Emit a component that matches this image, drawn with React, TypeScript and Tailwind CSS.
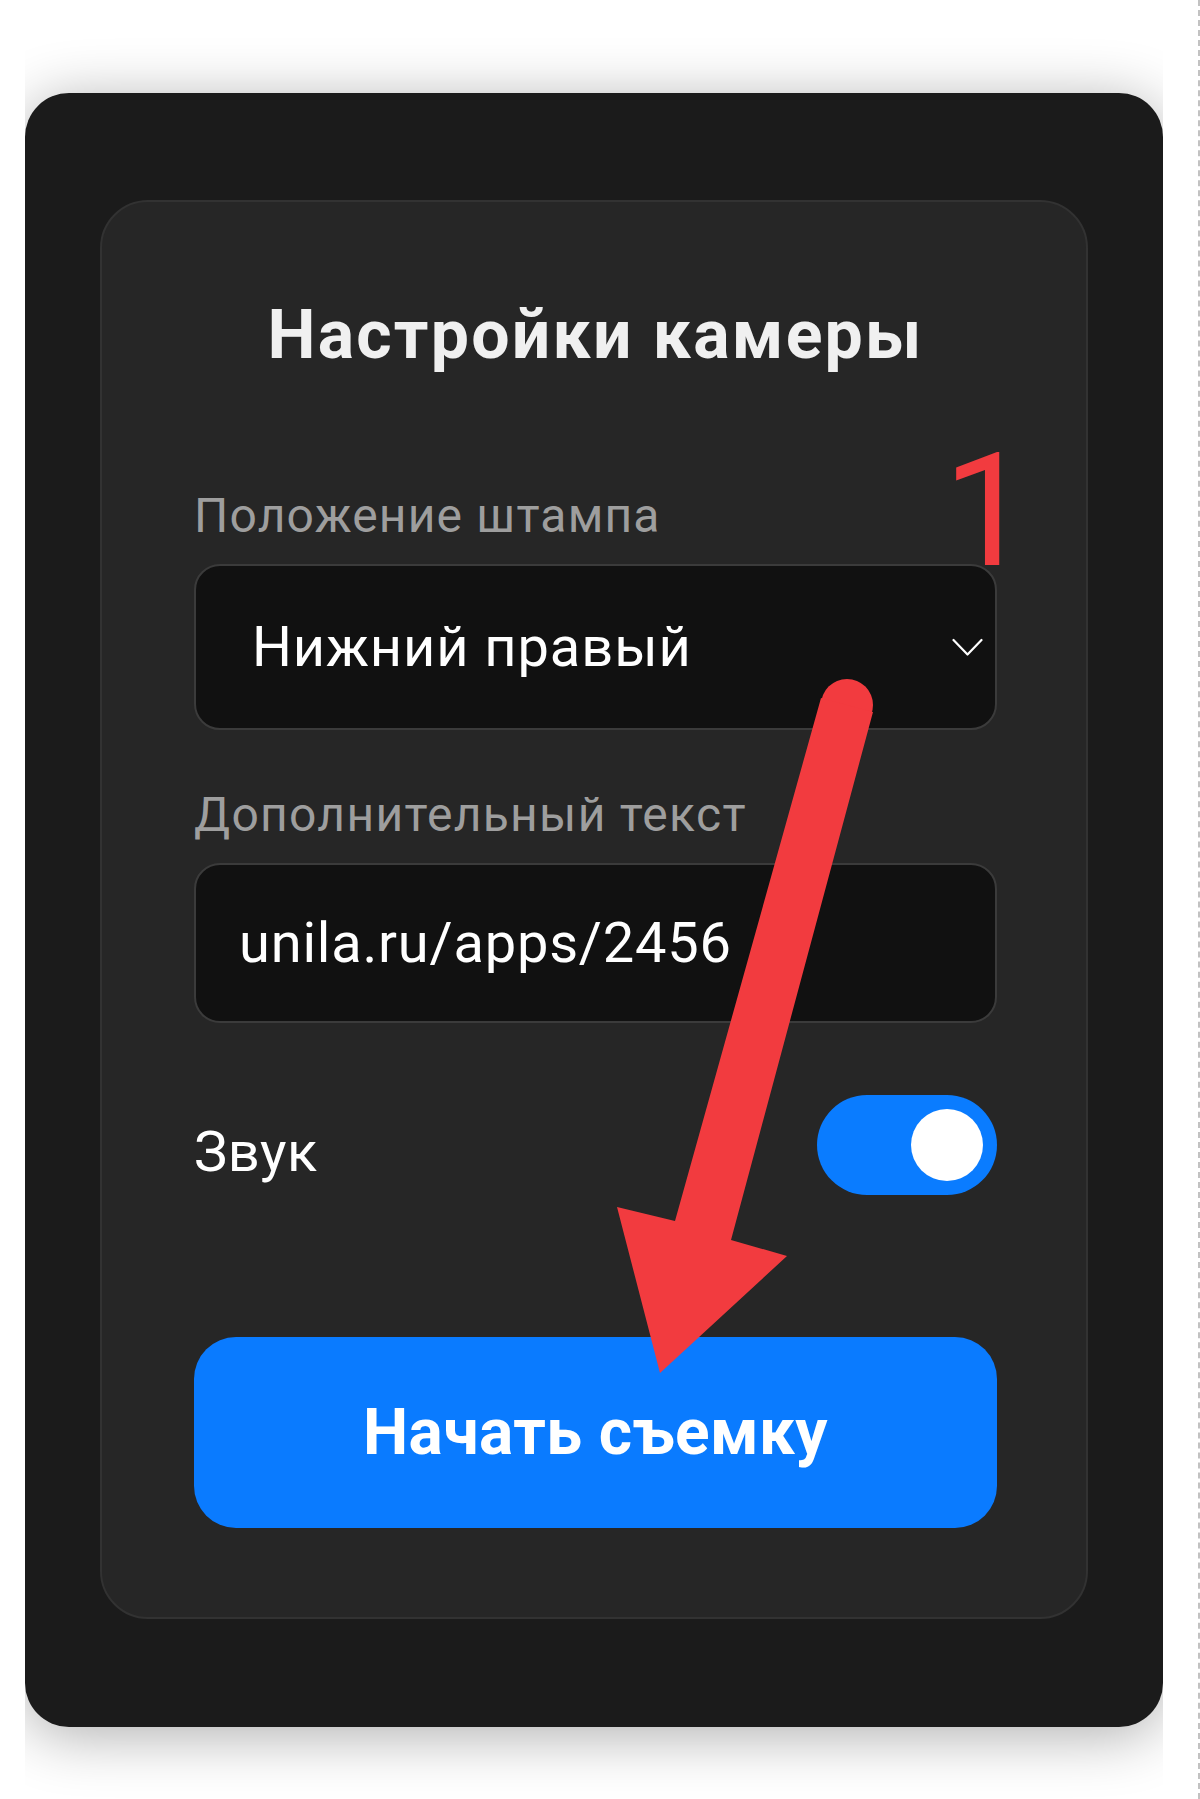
import * as React from "react";
import { useState } from "react";

const font = { fontFamily: "Roboto, 'Noto Sans', sans-serif" };

const Toggle = ({ on, onChange }: { on: boolean; onChange: (v: boolean) => void }) => (
  <button
    type="button"
    onClick={() => onChange(!on)}
    className={`flex w-[180px] h-[100px] shrink-0 items-center rounded-full px-[14px] ${
      on ? "justify-end bg-[#0a7cff]" : "justify-start bg-[#3a3a3a]"
    }`}
  >
    <span className="block w-[72px] h-[72px] rounded-full bg-white" />
  </button>
);

const Chevron = () => (
  <svg width="31" height="19" viewBox="0 0 31 19" fill="none" className="shrink-0">
    <path d="M1.5 2 L15.5 16.5 L29.5 2" stroke="#ffffff" strokeWidth="2.2" strokeLinecap="round" strokeLinejoin="round" />
  </svg>
);

// red annotation drawn over the form: the "1" mark and the pointer arrow
const Annotations = () => (
  <>
    <span
      className="absolute left-[943px] top-[432px] text-[158px] leading-none font-normal text-[#f23b3f] pointer-events-none"
      style={font}
    >
      1
    </span>
    <svg className="absolute inset-0 pointer-events-none" width="1200" height="1799" viewBox="0 0 1200 1799">
      <circle cx="847" cy="705" r="26" fill="#f23b3f" />
      <polygon
        points="821,698 675,1221 617,1207 660,1373 787,1256 731,1240 873,712"
        fill="#f23b3f"
      />
    </svg>
  </>
);

const App = () => {
  const [sound, setSound] = useState(true);

  return (
    <div className="relative w-[1200px] h-[1799px] bg-white border-r-2 border-dashed border-[#c2c2c2] overflow-hidden" style={font}>
      <div className="ml-[25px] w-[1138px] h-full overflow-hidden pt-[93px]">
        <div className="rounded-[44px] bg-[#1b1b1b] px-[75px] pt-[107px] pb-[108px] shadow-[0_8px_60px_rgba(0,0,0,0.32)]">
          <div className="flex flex-col rounded-[48px] border-2 border-[#323232] bg-[#262626] pl-[92px] pr-[89px] pt-[93px] pb-[89px]">
            <h1 className="text-center text-[68px] leading-[80px] font-bold tracking-[2.2px] text-[#f0f0f0]">
              Настройки камеры
            </h1>

            <label className="mt-[113px] text-[48px] leading-[56px] tracking-[1.2px] text-[#9e9e9e]">
              Положение штампа
            </label>
            <div className="mt-[20px] flex h-[166px] items-center justify-between rounded-[26px] border-2 border-[#3b3b3b] bg-[#111111] pl-[56px] pr-[12px]">
              <span className="text-[56px] leading-none tracking-[0.9px] text-white">Нижний правый</span>
              <Chevron />
            </div>

            <label className="mt-[57px] text-[48px] leading-[56px] tracking-[1.3px] text-[#9e9e9e]">
              Дополнительный текст
            </label>
            <div className="mt-[20px] flex h-[160px] items-center rounded-[26px] border-2 border-[#3b3b3b] bg-[#111111] pl-[43px]">
              <span className="text-[56px] leading-none tracking-[0.8px] text-white">unila.ru/apps/2456</span>
            </div>

            <div className="mt-[72px] flex h-[100px] items-center justify-between">
              <span className="pt-[14px] text-[56px] leading-[64px] tracking-[0.5px] text-white">Звук</span>
              <Toggle on={sound} onChange={setSound} />
            </div>

            <button
              type="button"
              className="mt-[142px] flex h-[191px] items-center justify-center rounded-[42px] bg-[#0a7bff] text-[64px] font-bold tracking-[0.4px] text-white"
            >
              Начать съемку
            </button>
          </div>
        </div>
      </div>
      <Annotations />
    </div>
  );
};

export default App;
